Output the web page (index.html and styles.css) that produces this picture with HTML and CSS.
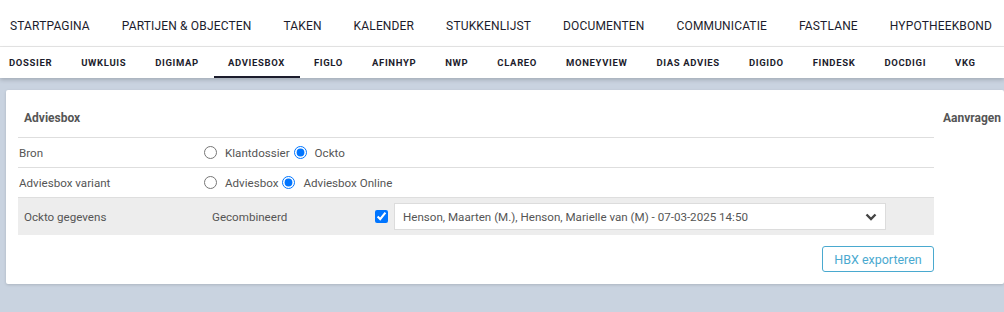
FILE: index.html
```html
<!DOCTYPE html>
<html lang="nl">
<head>
<meta charset="UTF-8" />
<meta name="viewport" content="width=device-width, initial-scale=1.0"/>
<title>Adviesbox</title>
<link rel="stylesheet" href="styles.css">
</head>
<body>

<nav class="mainnav">
<a href="#">Startpagina</a>
<a href="#">Partijen &amp; objecten</a>
<a href="#">Taken</a>
<a href="#">Kalender</a>
<a href="#">Stukkenlijst</a>
<a href="#">Documenten</a>
<a href="#">Communicatie</a>
<a href="#">Fastlane</a>
<a href="#">Hypotheekbond</a>
</nav>

<nav class="subnav">
<a href="#">Dossier</a>
<a href="#">Uwkluis</a>
<a href="#">Digimap</a>
<a href="#" class="active">Adviesbox</a>
<a href="#">Figlo</a>
<a href="#">Afinhyp</a>
<a href="#">NWP</a>
<a href="#">Clareo</a>
<a href="#">Moneyview</a>
<a href="#">Dias advies</a>
<a href="#">Digido</a>
<a href="#">Findesk</a>
<a href="#">Docdigi</a>
<a href="#">VKG</a>
</nav>

<main class="page">
<section class="card">
<div class="panel">
<h2 class="panel-title">Adviesbox</h2>

<div class="row">
<div class="label">Bron</div>
<div class="options">
<label><input type="radio" name="bron">Klantdossier</label>
<label><input type="radio" name="bron" checked>Ockto</label>
</div>
</div>

<div class="row">
<div class="label">Adviesbox variant</div>
<div class="options">
<label><input type="radio" name="variant">Adviesbox</label>
<label><input type="radio" name="variant" checked>Adviesbox Online</label>
</div>
</div>

<div class="row row-grey">
<div class="label">Ockto gegevens</div>
<div class="combined">Gecombineerd</div>
<input type="checkbox" class="check" checked>
<div class="select">
<span>Henson, Maarten (M.), Henson, Marielle van (M) - 07-03-2025 14:50</span>
<svg width="12" height="8" viewBox="0 0 12 8"><path d="M1.5 1.5 L6 6 L10.5 1.5" fill="none" stroke="#444" stroke-width="2.4"/></svg>
</div>
</div>

<div class="actions">
<button class="btn-outline">HBX exporteren</button>
</div>
</div>

<aside class="side">
<h2 class="panel-title">Aanvragen</h2>
</aside>
</section>
</main>

</body>
</html>
```

FILE: styles.css
```css
* { box-sizing: border-box; }
body {
margin: 0;
font-family: Roboto, 'Liberation Sans', sans-serif;
background-color: #c9d3e0;
min-height: 100vh;
}
.mainnav {
display: flex;
align-items: center;
height: 47px;
padding: 6px 0 0 10px;
gap: 32px;
background: #fff;
border-bottom: 1px solid #e6e6e6;
white-space: nowrap;
overflow: hidden;
}
.mainnav a {
font-size: 12px;
letter-spacing: 0.15px;
text-transform: uppercase;
color: #1c1c2c;
text-decoration: none;
}
.subnav {
display: flex;
height: 31px;
background: #fff;
box-shadow: 0 2px 4px rgba(0, 0, 0, 0.18);
white-space: nowrap;
overflow: hidden;
}
.subnav a {
display: flex;
align-items: center;
padding: 2px 15px 0 14px;
font-size: 9.5px;
font-weight: 700;
letter-spacing: 0.65px;
text-transform: uppercase;
color: #1c1c2c;
text-decoration: none;
border-bottom: 2px solid transparent;
}
.subnav a:first-child { padding-left: 9px; }
.subnav a.active { border-bottom-color: #1c1c2c; }
.page {
padding: 12px 0 0 6px;
}
.card {
display: flex;
background: #fff;
padding: 10px 0 12px 12px;
border-radius: 2px;
box-shadow: 0 1px 3px rgba(0, 0, 0, 0.15);
}
.panel {
width: 916px;
}
.side {
padding-left: 9px;
}
.panel-title {
margin: 0;
height: 37px;
line-height: 36px;
font-size: 12px;
font-weight: 700;
color: #555;
padding-left: 6px;
}
.side .panel-title { padding-left: 0; }
.row {
display: flex;
align-items: center;
height: 30px;
border-top: 1px solid #dedede;
font-size: 11.6px;
color: #555;
}
.row .label {
width: 182px;
padding-left: 1px;
}
.options {
display: flex;
align-items: center;
}
.options label {
display: flex;
align-items: center;
}
.options input {
margin: 0 8px 0 4px;
width: 13px;
height: 13px;
}
.row-grey {
height: 38px;
background: #ededed;
padding-left: 6px;
}
.row-grey .label {
width: 188px;
padding-left: 0;
}
.combined {
width: 159px;
}
.check {
margin: 0 6px 0 4px;
width: 13px;
height: 13px;
}
.select {
display: flex;
align-items: center;
justify-content: space-between;
width: 492px;
height: 27px;
padding: 0 8px 0 8px;
background: #fff;
border: 1px solid #dcdcdc;
color: #555;
}
.actions {
display: flex;
justify-content: flex-end;
padding-top: 11px;
}
.btn-outline {
height: 26px;
width: 112px;
font-family: Roboto, sans-serif;
font-size: 12.5px;
color: #4aa9cf;
background: #fff;
border: 1px solid #4aa9cf;
border-radius: 3px;
}
```
